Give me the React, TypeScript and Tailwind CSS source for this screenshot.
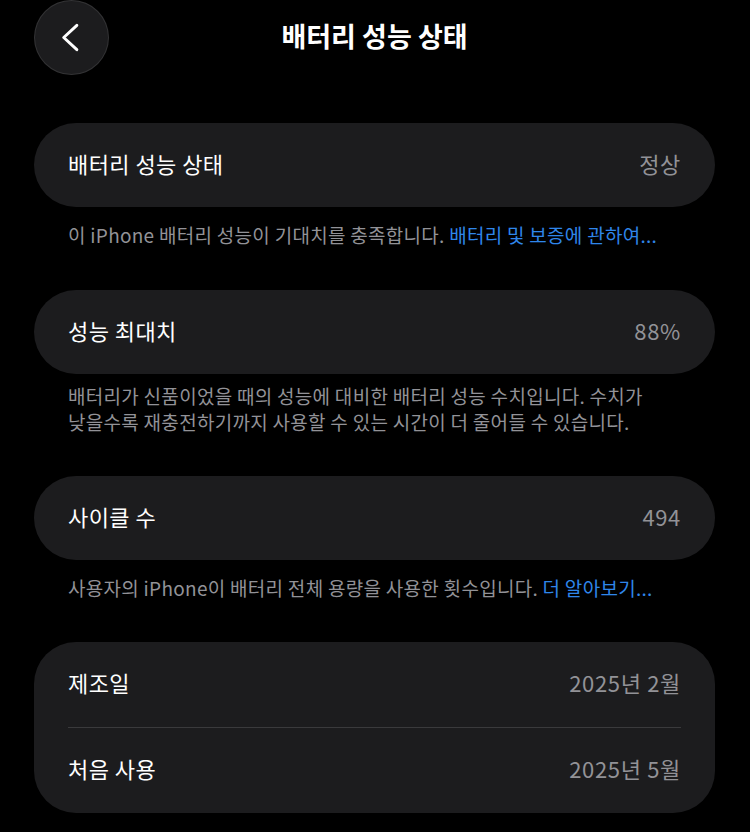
import React from 'react';

const FONT = "font-['Noto_Sans_CJK_KR','Noto_Sans',sans-serif]";

function Card({ children }: { children: React.ReactNode }) {
  return <div className="rounded-[42px] bg-[#1c1c1e] px-[34px]">{children}</div>;
}

function Row({ label, value, h = 'h-[84px]' }: { label: string; value: string; h?: string }) {
  return (
    <div className={`flex ${h} items-center justify-between pb-[4px]`}>
      <span className="text-[22px] text-white tracking-[0.02em]">{label}</span>
      <span className="text-[22px] text-[#929297] tracking-[0.03em]">{value}</span>
    </div>
  );
}

function Footer({ children, className = '' }: { children: React.ReactNode; className?: string }) {
  return (
    <p className={`px-[34px] text-[19px] leading-[26px] tracking-[0.015em] text-[#929297] ${className}`}>
      {children}
    </p>
  );
}

function BackButton() {
  return (
    <button className="flex h-[75px] w-[75px] items-center justify-center rounded-full border border-white/10 bg-[#1c1c1e]">
      <svg width="75" height="75" viewBox="0 0 75 75" fill="none">
        <path d="M43 25 L29.5 37.5 L43 50" stroke="white" strokeWidth="3" strokeLinecap="round" strokeLinejoin="round" />
      </svg>
    </button>
  );
}

export default function App() {
  return (
    <div className={`min-h-[832px] w-[750px] bg-black ${FONT}`}>
      <div className="ml-[34px] mr-[35px]">
        {/* header */}
        <div className="grid h-[75px] grid-cols-[75px_1fr_75px] items-center">
          <BackButton />
          <h1 className="pb-[2px] text-center text-[27px] font-semibold text-white">배터리 성능 상태</h1>
          <div />
        </div>

        <div className="mt-[48px]">
          <Card>
            <Row label="배터리 성능 상태" value="정상" />
          </Card>
          <Footer className="mt-[15px]">
            이 iPhone 배터리 성능이 기대치를 충족합니다.{' '}
            <span className="text-[#2f86ea]">배터리 및 보증에 관하여...</span>
          </Footer>
        </div>

        <div className="mt-[42px]">
          <Card>
            <Row label="성능 최대치" value="88%" />
          </Card>
          <Footer className="mt-[9px]">
            배터리가 신품이었을 때의 성능에 대비한 배터리 성능 수치입니다. 수치가
            <br />
            낮을수록 재충전하기까지 사용할 수 있는 시간이 더 줄어들 수 있습니다.
          </Footer>
        </div>

        <div className="mt-[41px]">
          <Card>
            <Row label="사이클 수" value="494" />
          </Card>
          <Footer className="mt-[15px]">
            사용자의 iPhone이 배터리 전체 용량을 사용한 횟수입니다.{' '}
            <span className="text-[#2f86ea]">더 알아보기...</span>
          </Footer>
        </div>

        <div className="mt-[41px]">
          <Card>
            <Row label="제조일" value="2025년 2월" h="h-[85px]" />
            <div className="h-px bg-[#3a3a3c]" />
            <Row label="처음 사용" value="2025년 5월" h="h-[85px]" />
          </Card>
        </div>
      </div>
    </div>
  );
}
